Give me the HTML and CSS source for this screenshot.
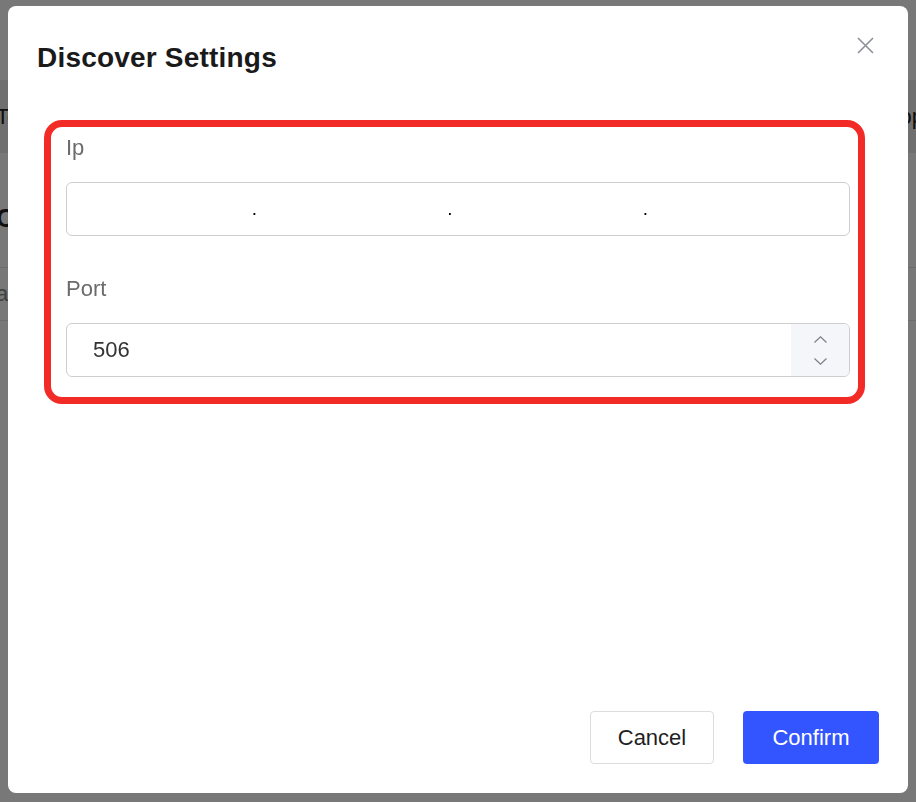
FILE: index.html
```html
<!DOCTYPE html>
<html lang="en">
<head>
    <meta charset="UTF-8">
    <meta name="viewport" content="width=device-width, initial-scale=1.0">
    <title>Discover Settings</title>
    <link rel="stylesheet" href="styles.css">
</head>
<body>
    <!-- page behind the dialog -->
    <div class="page">
        <div class="page-top"></div>
        <div class="page-toolbar">
            <span class="edge-left">Top</span>
            <span class="edge-right">Stop</span>
        </div>
        <div class="page-title"><span class="edge-left">Co</span></div>
        <div class="page-table">
            <div class="table-row"><span class="edge-left">ate</span></div>
        </div>
    </div>

    <div class="mask">
        <div class="dialog">
            <div class="dialog-header">
                <h2>Discover Settings</h2>
                <button class="close-btn" aria-label="Close">
                    <svg width="17" height="17" viewBox="0 0 17 17">
                        <path d="M1 1L16 16M16 1L1 16" stroke="#8e9099" stroke-width="1.6" fill="none"/>
                    </svg>
                </button>
            </div>

            <div class="dialog-body">
                <div class="highlight">
                    <div class="field">
                        <label>Ip</label>
                        <div class="ip-input">
                            <div class="ip-seg"><input type="text"><span class="ip-dot">.</span></div>
                            <div class="ip-seg"><input type="text"><span class="ip-dot">.</span></div>
                            <div class="ip-seg"><input type="text"><span class="ip-dot">.</span></div>
                            <div class="ip-seg"><input type="text"></div>
                        </div>
                    </div>
                    <div class="field">
                        <label>Port</label>
                        <div class="number-input">
                            <input type="text" value="506">
                            <div class="spin">
                                <svg width="13" height="7" viewBox="0 0 13 7">
                                    <path d="M0.5 6.5L6.5 0.8L12.5 6.5" stroke="#7d7f88" stroke-width="1.2" fill="none"/>
                                </svg>
                                <svg width="13" height="7" viewBox="0 0 13 7">
                                    <path d="M0.5 0.5L6.5 6.2L12.5 0.5" stroke="#7d7f88" stroke-width="1.2" fill="none"/>
                                </svg>
                            </div>
                        </div>
                    </div>
                </div>
            </div>

            <div class="dialog-footer">
                <button class="btn btn-cancel">Cancel</button>
                <button class="btn btn-confirm">Confirm</button>
            </div>
        </div>
    </div>
</body>
</html>
```

FILE: styles.css
```css
body {
    margin: 0;
    font-family: "Liberation Sans", Arial, Helvetica, sans-serif;
    background-color: white;
    overflow: hidden;
}

/* background page */
.page {
    height: 100vh;
    color: #222;
}
.page-top {
    height: 80px;
}
.page-toolbar {
    height: 73px;
    background-color: #ececec;
    display: flex;
    justify-content: space-between;
    align-items: center;
    font-size: 22px;
}
.page-title {
    height: 98px;
    padding-top: 16px;
    display: flex;
    align-items: center;
    font-size: 26px;
    font-weight: bold;
    border-bottom: 1px solid #e6e6e6;
}
.table-row {
    height: 52px;
    display: flex;
    align-items: center;
    font-size: 22px;
    color: #888;
    border-bottom: 1px solid #e6e6e6;
}
.edge-left {
    margin-left: -4px;
}
.edge-right {
    margin-right: -8px;
}

/* dialog */
.mask {
    position: fixed;
    inset: 0;
    background-color: rgba(0, 0, 0, 0.53);
    display: flex;
    padding: 6px 8px 9px 8px;
}
.dialog {
    flex: 1;
    min-width: 0;
    display: flex;
    flex-direction: column;
    background-color: white;
    border-radius: 8px;
}
.dialog-header {
    display: flex;
    justify-content: space-between;
    align-items: flex-start;
    padding: 32px 31px 0 29px;
}
.dialog-header h2 {
    margin: 0;
    font-size: 28px;
    line-height: 40px;
    font-weight: bold;
    letter-spacing: 0.2px;
    color: #1a1a1a;
}
.close-btn {
    width: 24px;
    height: 24px;
    margin-top: -5px;
    padding: 0;
    border: none;
    background: none;
    display: flex;
    align-items: center;
    justify-content: center;
    cursor: pointer;
}

.dialog-body {
    padding: 42px 43px 0 36px;
}
.highlight {
    border: 7px solid #f32b27;
    border-radius: 18px;
    padding: 6px 8px 20px 15px;
}
.field + .field {
    margin-top: 38px;
}
.field label {
    display: block;
    font-size: 22px;
    line-height: 30px;
    color: #6b6b6b;
    margin-bottom: 19px;
}

.ip-input,
.number-input {
    height: 54px;
    box-sizing: border-box;
    border: 1px solid #cdcdd2;
    border-radius: 6px;
    display: flex;
    overflow: hidden;
}
.ip-seg {
    flex: 1 1 0;
    display: flex;
    min-width: 0;
}
input {
    flex: 1;
    width: 0;
    min-width: 0;
    border: none;
    outline: none;
    background: transparent;
    font-family: inherit;
    font-size: 22px;
    color: #333;
}
.ip-dot {
    width: 16px;
    text-align: center;
    font-size: 19px;
    line-height: 18px;
    padding-top: 17px;
    color: #000;
}
.number-input input {
    padding: 0 0 0 26px;
}
.spin {
    width: 58px;
    background-color: #f5f6fa;
    display: flex;
    flex-direction: column;
    align-items: center;
    justify-content: center;
    gap: 15px;
}

.dialog-footer {
    margin-top: auto;
    display: flex;
    justify-content: flex-end;
    gap: 29px;
    padding: 0 29px 29px 0;
}
.btn {
    height: 53px;
    font-family: inherit;
    font-size: 22px;
    border-radius: 4px;
    cursor: pointer;
}
.btn-cancel {
    width: 124px;
    background-color: white;
    border: 1px solid #dcdcdc;
    color: #1f1f1f;
}
.btn-confirm {
    width: 136px;
    background-color: #3355ff;
    border: none;
    color: white;
}
```
